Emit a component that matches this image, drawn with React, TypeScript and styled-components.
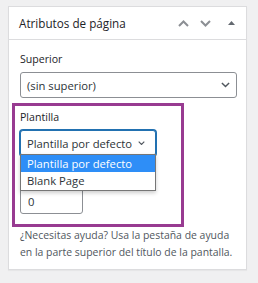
import React from 'react';
import styled, { createGlobalStyle } from 'styled-components';

const Global = createGlobalStyle`
  html, body { margin: 0; padding: 0; background: #f0f0f1; }
  body { font-family: "Open Sans", "Noto Sans", sans-serif; color: #3c434a; }
  * { box-sizing: border-box; }
`;

const Page = styled.div`
  padding: 6px 0 0 8px;
  height: 283px;
`;

const Panel = styled.section`
  width: 239px;
  background: #fff;
  border: 1px solid #dcdcde;
  box-shadow: 0 1px 1px rgba(0, 0, 0, 0.04);
`;

const Header = styled.div`
  height: 33px;
  display: flex;
  align-items: center;
  padding-left: 10px;
  border-bottom: 1px solid #dcdcde;
`;

const Title = styled.h2`
  flex: 1;
  margin: 0;
  font-size: 11.7px;
  font-weight: 400;
  color: #1d2327;
`;

const HeaderButton = styled.button<{ $w: number }>`
  width: ${(p) => p.$w}px;
  height: 32px;
  padding: 0;
  border: 0;
  background: none;
  display: flex;
  align-items: center;
  justify-content: center;
  color: #8c8f94;
`;

const Inside = styled.div`
  padding: 0 9px 8px 11px;
`;

const Field = styled.div`
  position: relative;
  margin-top: 10px;
`;

const Label = styled.label`
  display: block;
  font-size: 10.6px;
  line-height: 18px;
  color: #1d2327;
  margin-bottom: 4px;
`;

const SelectBox = styled.div<{ $width?: number; $focused?: boolean; $padRight: number }>`
  position: relative;
  width: ${(p) => (p.$width ? `${p.$width}px` : '100%')};
  height: 26px;
  display: flex;
  align-items: center;
  justify-content: space-between;
  padding: 0 ${(p) => p.$padRight}px 0 6px;
  border: 1px solid ${(p) => (p.$focused ? '#2271b1' : '#8c8f94')};
  border-radius: 3px;
  box-shadow: ${(p) => (p.$focused ? '0 0 0 1px #2271b1' : 'none')};
  font-size: 11.25px;
  color: #2c3338;
  background: #fff;
  white-space: nowrap;
`;

const Options = styled.ul`
  position: absolute;
  left: -1px;
  top: 23px;
  width: 136px;
  margin: 0;
  padding: 0 0 1px;
  list-style: none;
  background: #fff;
  border: 1px solid #767676;
  box-shadow: 0 2px 4px rgba(0, 0, 0, 0.2);
  z-index: 2;
`;

const Option = styled.li<{ $active?: boolean }>`
  height: 17px;
  padding: 1px 6px 0;
  line-height: 16px;
  font-size: 11.25px;
  white-space: nowrap;
  color: ${(p) => (p.$active ? '#fff' : '#2c3338')};
  background: ${(p) => (p.$active ? '#2e8ef7' : 'transparent')};
`;

const NumberInput = styled.input`
  display: block;
  width: 63px;
  height: 26px;
  padding: 0 7px;
  border: 1px solid #8c8f94;
  border-radius: 3px;
  font-family: inherit;
  font-size: 11.25px;
  color: #2c3338;
  appearance: textfield;
  &::-webkit-inner-spin-button,
  &::-webkit-outer-spin-button { -webkit-appearance: none; margin: 0; }
`;

const Highlight = styled.div`
  position: absolute;
  left: -8px;
  top: -5px;
  width: 172px;
  height: 124px;
  border: 3px solid #983b91;
  pointer-events: none;
  z-index: 3;
`;

const Help = styled.p`
  margin: 13px 0 0;
  font-size: 10.45px;
  line-height: 17px;
  color: #50575e;
`;

const Chevron = ({ w = 8 }: { w?: number }) => (
  <svg width={w} height={w * 0.6} viewBox="0 0 10 6" fill="none" stroke="#50575e" strokeWidth="1.6">
    <path d="M1 1 L5 5 L9 1" />
  </svg>
);

export default function App() {
  return (
    <>
      <Global />
      <Page>
        <Panel>
          <Header>
            <Title>Atributos de página</Title>
            <HeaderButton $w={22} aria-label="Subir">
              <svg width="11" height="7" viewBox="0 0 11 7" fill="none" stroke="currentColor" strokeWidth="2">
                <path d="M1 6 L5.5 1.5 L10 6" />
              </svg>
            </HeaderButton>
            <HeaderButton $w={22} aria-label="Bajar">
              <svg width="11" height="7" viewBox="0 0 11 7" fill="none" stroke="currentColor" strokeWidth="2">
                <path d="M1 1 L5.5 5.5 L10 1" />
              </svg>
            </HeaderButton>
            <HeaderButton $w={30} aria-label="Alternar panel">
              <svg width="7" height="4" viewBox="0 0 7 4">
                <path d="M0 4 L3.5 0 L7 4 Z" fill="#646970" />
              </svg>
            </HeaderButton>
          </Header>
          <Inside>
            <Field>
              <Label>Superior</Label>
              <SelectBox $padRight={6}>
                <span>(sin superior)</span>
                <Chevron w={9} />
              </SelectBox>
            </Field>
            <Field>
              <Highlight />
              <Label>Plantilla</Label>
              <SelectBox $width={136} $focused $padRight={10}>
                <span>Plantilla por defecto</span>
                <Chevron w={7} />
                <Options>
                  <Option $active>Plantilla por defecto</Option>
                  <Option>Blank Page</Option>
                </Options>
              </SelectBox>
            </Field>
            <Field>
              <Label>Orden</Label>
              <NumberInput type="number" defaultValue={0} />
            </Field>
            <Help>¿Necesitas ayuda? Usa la pestaña de ayuda en la parte superior del título de la pantalla.</Help>
          </Inside>
        </Panel>
      </Page>
    </>
  );
}
